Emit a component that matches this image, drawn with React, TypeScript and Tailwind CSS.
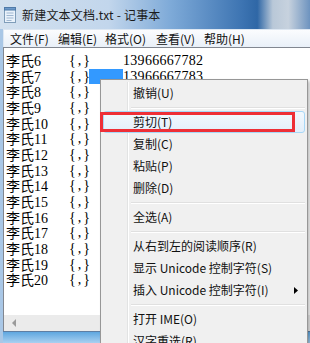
import React from "react";

const rows = [6, 7, 8, 9, 10, 11, 12, 13, 14, 15, 16, 17, 18, 19, 20];
const numbers: Record<number, string> = { 6: "13966667782", 7: "13966667783" };

type Item = { label: string; sep?: false; hot?: boolean; sub?: boolean } | { sep: true };

const items: Item[] = [
  { label: "撤销(U)" },
  { sep: true },
  { label: "剪切(T)", hot: true },
  { label: "复制(C)" },
  { label: "粘贴(P)" },
  { label: "删除(D)" },
  { sep: true },
  { label: "全选(A)" },
  { sep: true },
  { label: "从右到左的阅读顺序(R)" },
  { label: "显示 Unicode 控制字符(S)" },
  { label: "插入 Unicode 控制字符(I)", sub: true },
  { sep: true },
  { label: "打开 IME(O)" },
  { label: "汉字重选(R)" },
];

function NotepadIcon() {
  return (
    <svg width="12" height="16" viewBox="0 0 12 16">
      <rect x="0.5" y="1.5" width="11" height="14" fill="#e9f2fb" stroke="#7f9db9" />
      <rect x="0.5" y="0.5" width="11" height="2.5" fill="#6d9acb" stroke="#4f7aa8" />
      <path d="M2.5 6h7M2.5 8.5h7M2.5 11h7M2.5 13.5h5" stroke="#9fb7d1" strokeWidth="1" />
    </svg>
  );
}

export default function App() {
  return (
    <div
      className="relative w-[310px] h-[343px] overflow-hidden flex flex-col bg-[#a9c7e6]"
      style={{ fontFamily: '"Noto Sans CJK SC", sans-serif' }}
    >
      {/* Title bar */}
      <div className="h-[29px] flex items-center gap-[6px] pl-[4px] bg-[linear-gradient(to_right,#d3e1ef_0%,#c2d6ec_35%,#7eaad8_55%,#3d74b2_78%,#2f67a6_83%,#b9c8d8_88%,#c7d2de_93%,#6d93bf_100%)]">
        <NotepadIcon />
        <span className="text-[12px] text-[#1b1b1b] leading-none tracking-[0.2px]">新建文本文档.txt - 记事本</span>
      </div>

      <div className="flex-1 flex flex-col pl-[3px]">
        {/* Menu bar */}
        <div className="h-[18px] flex items-center text-[12px] text-[#111] bg-[linear-gradient(to_bottom,#fbfcfe,#e9f0f8)] border-t border-[#dde7f2] border-l border-[#8fa9c6]">
          <span className="w-[54px] pl-[6px]">文件(F)</span>
          <span className="w-[47px]">编辑(E)</span>
          <span className="w-[51px]">格式(O)</span>
          <span className="w-[48px]">查看(V)</span>
          <span>帮助(H)</span>
        </div>

        {/* Text area */}
        <div className="flex-1 bg-white border-l border-t border-[#828790] pt-[5px] pl-[2px] text-[14px] text-black">
          {rows.map((n) => (
            <div key={n} className="flex h-[15.7px] items-center leading-none whitespace-pre">
              <span className="w-[63px]">
                李氏<span style={{ fontFamily: '"Liberation Serif", serif' }}>{n}</span>
              </span>
              <span className="w-[17px] tracking-[2px]" style={{ fontFamily: '"Liberation Serif", serif' }}>
                {"{,}"}
              </span>
              <span className="w-[37px] h-full flex">
                {n === 7 && <span className="ml-[3px] flex-1 bg-[#3399ff]" />}
              </span>
              <span className="tracking-[0.3px]" style={{ fontFamily: '"Liberation Serif", serif' }}>
                {numbers[n] ?? ""}
              </span>
            </div>
          ))}
        </div>

        {/* Horizontal scrollbar */}
        <div className="h-[16px] flex items-center bg-[#ebebeb] border-l border-[#828790] pl-[8px]">
          <svg width="5" height="8" viewBox="0 0 5 8">
            <path d="M4 0L0 4L4 8Z" fill="#9a9a9a" />
          </svg>
        </div>
        <div className="h-[1px] bg-[#5e7ea3]" />
        <div className="h-[11px] bg-[linear-gradient(to_bottom,#5fa7e0,#a9d0f0)]" />
      </div>

      {/* Context menu */}
      <div className="absolute left-[100px] top-[79px] w-[208px] h-[280px] bg-[#f0f0f0] border border-[#979797] shadow-[2px_2px_3px_rgba(0,0,0,0.25)] pt-[2px] px-[2px] text-[12px] text-[#111]">
        <div className="absolute left-[26px] top-[2px] bottom-0 w-[2px] border-l border-[#e2e3e3] bg-white" />
        {items.map((it, i) =>
          it.sep ? (
            <div key={i} className="h-[7px] flex items-center pl-[28px]">
              <div className="flex-1 h-[2px] border-t border-[#e0e0e0] bg-white" />
            </div>
          ) : (
            <div
              key={i}
              className={
                "relative h-[22px] flex items-center pl-[29px] pr-[6px] rounded-[3px] border " +
                (it.hot
                  ? "border-[#a8d8f7] bg-[linear-gradient(to_bottom,#f3f9fe,#e3effa)]"
                  : "border-transparent")
              }
            >
              <span className="flex-1 whitespace-nowrap">{it.label}</span>
              {it.sub && (
                <svg width="4" height="7" viewBox="0 0 4 7">
                  <path d="M0 0L4 3.5L0 7Z" fill="#000" />
                </svg>
              )}
            </div>
          )
        )}
      </div>

      {/* Red annotation box */}
      <div className="absolute left-[100px] top-[112px] w-[195px] h-[20px] border-[3px] border-[#ee2f37]" />
    </div>
  );
}
